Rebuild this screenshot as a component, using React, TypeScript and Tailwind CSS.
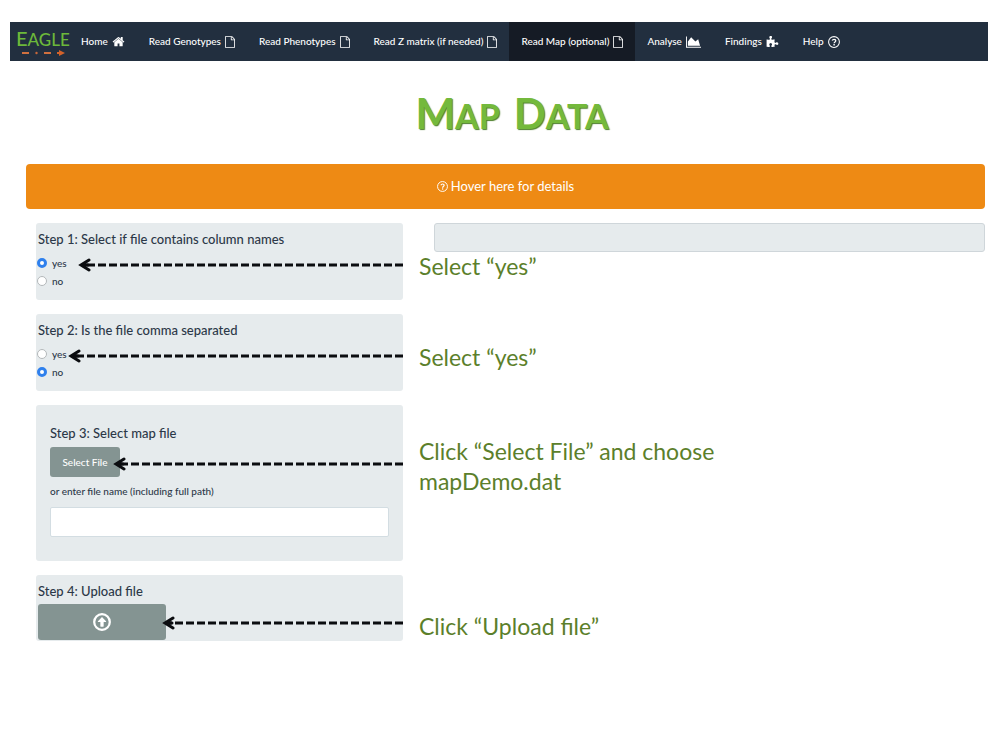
import type { ReactNode } from "react";

type IconProps = { className?: string };

function HomeIcon({ className }: IconProps) {
  return (
    <svg viewBox="0 128 1792 1500" fill="currentColor" className={className} aria-hidden="true">
      <path d="M1472 992v480q0 26-19 45t-45 19h-384v-384h-256v384h-384q-26 0-45-19t-19-45v-480q0-1 .5-3t.5-3l575-474 575 474q1 2 1 6zm223-69l-62 74q-8 9-21 11h-3q-13 0-21-7l-692-577-692 577q-12 8-24 7-13-2-21-11l-62-74q-8-10-7-23.5t11-21.5l719-599q32-26 76-26t76 26l244 204v-195q0-14 9-23t23-9h192q14 0 23 9t9 23v408l219 182q10 8 11 21.5t-7 23.5z" />
    </svg>
  );
}

function FileIcon({ className }: IconProps) {
  return (
    <svg viewBox="128 0 1536 1792" fill="currentColor" className={className} aria-hidden="true">
      <path d="M1596 380q28 28 48 76t20 88v1152q0 40-28 68t-68 28h-1344q-40 0-68-28t-28-68v-1600q0-40 28-68t68-28h896q40 0 88 20t76 48zm-444-244v376h376q-10-29-22-41l-313-313q-12-12-41-22zm384 1528v-1024h-416q-40 0-68-28t-28-68v-416h-768v1536h1280z" />
    </svg>
  );
}

function ChartIcon({ className }: IconProps) {
  return (
    <svg viewBox="0 128 2048 1536" fill="currentColor" className={className} aria-hidden="true">
      <path d="M2048 1536v128h-2048v-1536h128v1408h1920zm-384-1024l256 896h-1664v-576l448-576 576 576z" />
    </svg>
  );
}

function PuzzleIcon({ className }: IconProps) {
  return (
    <svg viewBox="64 0 1728 1700" fill="currentColor" className={className} aria-hidden="true">
      <path d="M1755 1083q0 81-44.5 135t-123.5 54q-41 0-77.5-17.5t-59-38-56.5-38-71-17.5q-110 0-110 124 0 39 16 115t15 115v5q-22 0-33 1-34 3-97.5 11.5t-115.5 13.5-98 5q-61 0-103-26.5t-42-83.5q0-37 17.5-71t38-56.5 38-59 17.5-77.5q0-79-54-123.5t-135-44.5q-84 0-143 45.5t-59 127.5q0 43 15 83t33.5 64.5 33.5 53 15 50.5q0 45-46 89-37 35-117 35-95 0-245-24-9-2-27.5-4t-27.5-4l-13-2q-1 0-3-1-2 0-2-1v-1024q2 1 17.5 3.5t34 5 21.5 3.5q150 24 245 24 80 0 117-35 46-44 46-89 0-22-15-50.5t-33.5-53-33.5-64.5-15-83q0-82 59-127.5t144-45.5q80 0 134 44.5t54 123.5q0 41-17.5 77.5t-38 59-38 56.5-17.5 71q0 57 42 83.5t103 26.5q64 0 180-15t163-17v2q-1 2-3.5 17.5t-5 34-3.5 21.5q-24 150-24 245 0 80 35 117 44 46 89 46 22 0 50.5-15t53-33.5 64.5-33.5 83-15q82 0 127.5 59t45.5 143z" />
    </svg>
  );
}

function QuestionIcon({ className }: IconProps) {
  return (
    <svg viewBox="0 0 24 24" fill="none" stroke="currentColor" className={className} aria-hidden="true">
      <circle cx="12" cy="12" r="10.8" strokeWidth="2.1" />
      <path d="M8.4 9.2C9.2 7.4 10.4 6.6 12.1 6.6c2 0 3.5 1.2 3.5 2.9 0 2.3-3.4 2.5-3.4 5" strokeWidth="2.6" />
      <path d="M12.2 16v2.8" strokeWidth="2.8" />
    </svg>
  );
}

function UploadIcon({ className }: IconProps) {
  return (
    <svg viewBox="0 0 24 24" fill="currentColor" className={className} aria-hidden="true">
      <circle cx="12" cy="12" r="10.4" fill="none" stroke="currentColor" strokeWidth="3" />
      <path d="M12 5.2l5.4 5.8c.4.5.1 1.1-.5 1.1h-2.7v5.6c0 .4-.2.6-.6.6h-3.2c-.4 0-.6-.2-.6-.6v-5.6H7.100c-.6 0-.9-.6-.5-1.1z" />
    </svg>
  );
}

function Logo() {
  return (
    <a href="#home" aria-label="Eagle" className="flex w-[59px] flex-col pl-[6px] text-[#6cb83a]">
      <span className="text-[17px] leading-[20px] font-medium whitespace-nowrap">
        <span className="text-[20px]">E</span>AGLE
      </span>
      <svg viewBox="0 0 53 6" className="h-[6px] w-[53px]" aria-hidden="true">
        <path d="M6 3h7M28 3h7" stroke="#d0703f" strokeWidth="1.8" />
        <circle cx="20.500" cy="3" r="1.200" fill="#c8673a" />
        <path d="M41 3h4" stroke="#d2622a" strokeWidth="2" />
        <path d="M43 0l6 3-6 3z" fill="#d2622a" />
      </svg>
    </a>
  );
}

const tabs: { label: string; icon: ReactNode; active?: boolean }[] = [
  { label: "Home", icon: <HomeIcon className="h-[11px] w-[13px]" /> },
  { label: "Read Genotypes", icon: <FileIcon className="h-[12px] w-[10px]" /> },
  { label: "Read Phenotypes", icon: <FileIcon className="h-[12px] w-[10px]" /> },
  { label: "Read Z matrix (if needed)", icon: <FileIcon className="h-[12px] w-[10px]" /> },
  { label: "Read Map (optional)", icon: <FileIcon className="h-[12px] w-[10px]" />, active: true },
  { label: "Analyse", icon: <ChartIcon className="h-[12px] w-[15px]" /> },
  { label: "Findings", icon: <PuzzleIcon className="h-[12px] w-[13px]" /> },
  { label: "Help", icon: <QuestionIcon className="h-[12px] w-[12px]" /> },
];

function Arrow({ className }: { className: string }) {
  return (
    <svg className={`absolute right-0 h-[14px] ${className}`} aria-hidden="true">
      <path d="M12 2L4 7l8 5M4 7h7" fill="none" stroke="#0b0d10" strokeWidth="3" strokeLinecap="round" strokeLinejoin="miter" />
      <line x1="100%" y1="7" x2="8" y2="7" stroke="#0b0d10" strokeWidth="3" strokeDasharray="8 3" />
    </svg>
  );
}

function Note({ className, children }: { className: string; children: ReactNode }) {
  return (
    <p className={`absolute left-full ml-[16px] w-[320px] text-[23px] leading-[30px] text-[#5c7f2b] ${className}`}>
      {children}
    </p>
  );
}

function Choice({ name, value, checked }: { name: string; value: string; checked?: boolean }) {
  return (
    <label className="flex h-[18px] items-center gap-[5px] text-[10px] leading-[18px] font-medium">
      <input
        type="radio"
        name={name}
        value={value}
        defaultChecked={checked}
        className="h-[10px] w-[10px] appearance-none rounded-full border border-[#b4b8ba] bg-white checked:border-[3px] checked:border-[#2f80ed]"
      />
      {value}
    </label>
  );
}

const panel = "relative rounded-[3px] bg-[#e6ebed]";
const heading = "text-[13px] leading-[18px] font-medium";

export default function App() {
  return (
    <div className="bg-white px-[10px] pt-[22px] font-['Lato',sans-serif] text-[#2c3848]">
      <nav className="mr-[2px] flex h-[39px] bg-[#222f3f] text-[10px] font-medium text-white">
        <div className="flex items-center">
          <Logo />
        </div>
        {tabs.map((t) => (
          <a
            key={t.label}
            href="#tab"
            aria-current={t.active ? "page" : undefined}
            className={`flex items-center gap-[4px] px-[12px] whitespace-nowrap ${t.active ? "bg-[#151b25]" : ""}`}
          >
            {t.label}
            {t.icon}
          </a>
        ))}
      </nav>

      <h1 className="mt-[26px] flex justify-center gap-[14px] pl-[24px] text-[34px] leading-[52px] font-bold text-[#74b93c] [text-shadow:1px_1px_1px_#4c7f2a]">
        <span>
          <span className="text-[42px]">M</span>AP
        </span>{" "}
        <span>
          <span className="text-[42px]">D</span>ATA
        </span>
      </h1>

      <main className="mt-[22px] mr-[5px] ml-[16px]">
        <button
          type="button"
          className="flex h-[45px] w-full items-center justify-center gap-[3px] rounded-[4px] bg-[#ee8a14] text-[13px] text-white"
        >
          <QuestionIcon className="h-[11px] w-[11px]" />
          Hover here for details
        </button>

        <div className="mt-[14px] ml-[10px] grid grid-cols-[367fr_551fr] items-start gap-[31px]">
          <div className="flex flex-col gap-[14px]">
            <fieldset className={`${panel} h-[77px] pl-[1px]`}>
              <legend className={`${heading} float-left mt-[7px] w-full pl-[1px]`}>Step 1: Select if file contains column names</legend>
              <div className="clear-both pt-[6px]">
                <Choice name="header" value="yes" checked />
                <Choice name="header" value="no" />
              </div>
              <Arrow className="top-[35px] w-[326px]" />
              <Note className="top-[28px]">Select “yes”</Note>
            </fieldset>

            <fieldset className={`${panel} h-[77px] pl-[1px]`}>
              <legend className={`${heading} float-left mt-[7px] w-full pl-[1px]`}>Step 2: Is the file comma separated</legend>
              <div className="clear-both pt-[6px]">
                <Choice name="comma" value="yes" />
                <Choice name="comma" value="no" checked />
              </div>
              <Arrow className="top-[35px] w-[336px]" />
              <Note className="top-[28px]">Select “yes”</Note>
            </fieldset>

            <section className={`${panel} px-[14px] pt-[19px] pb-[24px]`}>
              <h2 className={heading}>Step 3: Select map file</h2>
              <button type="button" className="mt-[5px] block h-[30px] w-[70px] rounded-[3px] bg-[#849492] text-[10px] font-medium text-white">
                Select File
              </button>
              <label htmlFor="path" className="mt-[6px] block text-[10px] leading-[16px] font-medium">
                or enter file name (including full path)
              </label>
              <input id="path" type="text" className="mt-[8px] block h-[30px] w-full rounded-[2px] border border-[#d3dde2] bg-white px-2 text-[11px]" />
              <Arrow className="top-[52px] w-[291px]" />
              <Note className="top-[31px]">Click “Select File” and choose mapDemo.dat</Note>
            </section>

            <section className={`${panel} pt-[7px] pb-[1px] pl-[2px]`}>
              <h2 className={heading}>Step 4: Upload file</h2>
              <button
                type="button"
                aria-label="Upload file"
                className="mt-[4px] flex h-[36px] w-[128px] items-center justify-center rounded-[3px] bg-[#849492] text-white"
              >
                <UploadIcon className="h-[18px] w-[18px]" />
              </button>
              <Arrow className="top-[41px] w-[242px]" />
              <Note className="top-[36px]">Click “Upload file”</Note>
            </section>
          </div>

          <textarea
            readOnly
            aria-label="Output"
            className="block h-[29px] w-full resize-none rounded-[3px] border border-[#cfd6da] bg-[#e6ebed]"
          />
        </div>
      </main>
    </div>
  );
}
